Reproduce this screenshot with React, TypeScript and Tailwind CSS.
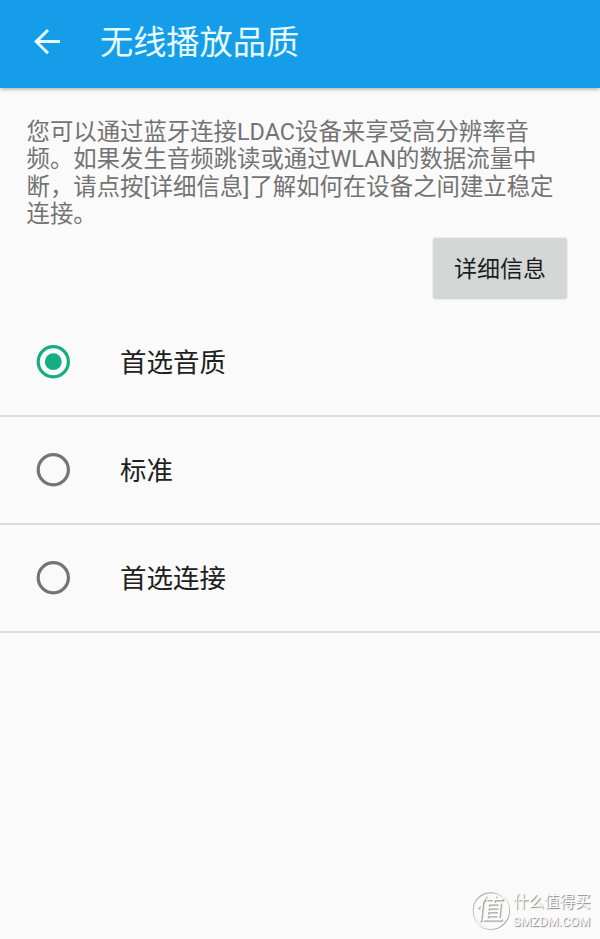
import React, { useState } from 'react';

const options = ['首选音质', '标准', '首选连接'];

const BackIcon: React.FC = () => (
    <svg className="w-7 h-7" viewBox="0 0 28 28" fill="none" stroke="#e6fcff" strokeWidth="3">
        <path d="M15 2 3.2 13.6 15 25.2M3.4 13.6H27" />
    </svg>
);

const RadioIcon: React.FC<{ checked: boolean }> = ({ checked }) => (
    <svg className="w-[34px] h-[34px]" viewBox="0 0 34 34" fill="none">
        <circle cx="17.3" cy="16.7" r="15.1" stroke={checked ? '#14ae82' : '#747474'} strokeWidth="3.2" />
        {checked && <circle cx="17.3" cy="16.7" r="8.4" fill="#14ae82" />}
    </svg>
);

const Watermark: React.FC = () => (
    <div className="absolute left-[470px] top-[888px] flex items-center text-[#fdfdfd] [text-shadow:1px_1px_1px_#858585]">
        <div className="relative w-10 h-10">
            <svg className="w-10 h-10" viewBox="0 0 40 40" fill="none">
                <circle cx="21" cy="20.7" r="18.3" stroke="#a9a9a9" strokeWidth="1.5" />
                <circle cx="20.3" cy="20" r="18.3" stroke="#fdfdfd" strokeWidth="1.3" />
            </svg>
            <span className="absolute inset-0 flex items-center justify-center text-[28px] leading-none -skew-x-6">值</span>
        </div>
        <div className="ml-[3px] w-[79px] pt-[3px] whitespace-nowrap">
            <div className="text-[15.5px] leading-[22px]">什么值得买</div>
            <div className="font-[Roboto] text-[12.7px] leading-[18px]">SMZDM.COM</div>
        </div>
    </div>
);

const App: React.FC = () => {
    const [selected, setSelected] = useState(0);

    return (
        <div className="relative h-[939px] w-[600px] overflow-hidden bg-[#fafafa] font-[Roboto,'Noto_Sans_CJK_SC',sans-serif]">
            {/* App bar */}
            <header className="flex h-[88px] items-center bg-[#159de9] pl-[33px] pb-1 shadow-[0_1px_4px_rgba(0,0,0,0.35)]">
                <button aria-label="返回"><BackIcon /></button>
                <h1 className="ml-[39px] pt-px text-[33.2px] leading-none text-[#e6fcff]">无线播放品质</h1>
            </header>

            {/* Description */}
            <section className="pl-[26.5px] pt-[31px]">
                <p className="text-[23.4px] leading-[27.3px] text-[#737373]">
                    您可以通过蓝牙连接LDAC设备来享受高分辨率音<br />
                    频。如果发生音频跳读或通过WLAN的数据流量中<br />
                    断，请点按[详细信息]了解如何在设备之间建立稳定<br />
                    连接。
                </p>
            </section>
            <div className="mt-[10px] flex justify-end pr-[33px]">
                <button className="h-[61px] w-[134px] rounded-[3px] bg-[#d3d7d6] pt-[3px] text-[23px] text-[#1d1d1d] shadow-[0_0_2px_rgba(0,0,0,0.2)]">详细信息</button>
            </div>

            {/* Quality options */}
            <ul className="mt-[10px]">
                {options.map((label, i) => (
                    <li
                        key={label}
                        onClick={() => setSelected(i)}
                        className="flex h-[108px] items-center border-b-2 border-[#dcdcdc] pl-9"
                    >
                        <RadioIcon checked={selected === i} />
                        <span className="ml-[50px] pt-[2px] text-[26.5px] leading-none text-[#202020]">{label}</span>
                    </li>
                ))}
            </ul>

            <Watermark />
        </div>
    );
};

export default App;
